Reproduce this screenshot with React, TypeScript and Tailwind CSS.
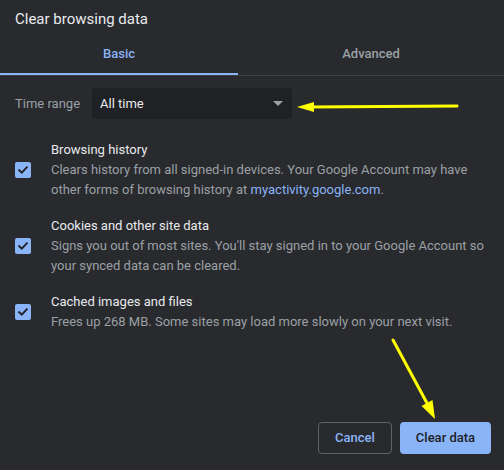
import React from "react";

function Check() {
  return (
    <div className="w-[16px] h-[16px] rounded-[2px] bg-[#8ab4f8] flex items-center justify-center shrink-0">
      <svg width="12" height="12" viewBox="0 0 12 12">
        <path d="M2.2 6.2 L4.8 8.7 L9.8 3.4" fill="none" stroke="#202124" strokeWidth="1.9" strokeLinecap="square" />
      </svg>
    </div>
  );
}

function Item({ title, children }: { title: string; children: React.ReactNode }) {
  return (
    <div className="flex items-center">
      <Check />
      <div className="ml-[20px]">
        <div className="text-[13px] leading-[20px] text-[#e8eaed]">{title}</div>
        <div className="text-[13px] leading-[20px] text-[#9aa0a6]">{children}</div>
      </div>
    </div>
  );
}

export default function App() {
  return (
    <div
      className="relative w-[504px] h-[470px] bg-[#292a2d] flex flex-col overflow-hidden"
      style={{ fontFamily: "Roboto, 'Liberation Sans', sans-serif" }}
    >
      <div className="px-[15px] pt-[10px] h-[28px] text-[15px] leading-[18px] text-[#e8eaed]">
        Clear browsing data
      </div>
      <div className="flex border-b border-[#3c4043]">
        <div className="w-[238px] h-[47px] flex flex-col">
          <div className="flex-1 flex items-end justify-center pb-[11px] text-[13px] leading-[16px] font-medium text-[#8ab4f8]">
            Basic
          </div>
          <div className="h-[2px] bg-[#8ab4f8]" />
        </div>
        <div className="flex-1 h-[47px] flex items-end justify-center pb-[13px] text-[13px] leading-[16px] font-medium text-[#9aa0a6]">
          Advanced
        </div>
      </div>
      <div className="flex items-center mt-[12px] px-[15px]">
        <div className="text-[13px] text-[#9aa0a6] w-[77px]">Time range</div>
        <div className="w-[200px] h-[31px] rounded-[4px] bg-[#202124] flex items-center justify-between pl-[8px] pr-[8px]">
          <span className="text-[13px] text-[#e8eaed]">All time</span>
          <svg width="10" height="5" viewBox="0 0 10 5" className="mr-[1px]">
            <path d="M0 0 L10 0 L5 5 Z" fill="#9aa0a6" />
          </svg>
        </div>
      </div>
      <div className="flex flex-col px-[15px] mt-[21px] gap-[16px]">
        <Item title="Browsing history">
          Clears history from all signed-in devices. Your Google Account may have
          <br />
          other forms of browsing history at <span className="text-[#8ab4f8]">myactivity.google.com</span>.
        </Item>
        <Item title="Cookies and other site data">
          Signs you out of most sites. You'll stay signed in to your Google Account so
          <br />
          your synced data can be cleared.
        </Item>
        <Item title="Cached images and files">
          Frees up 268 MB. Some sites may load more slowly on your next visit.
        </Item>
      </div>
      <div className="mt-auto flex justify-end gap-[8px] pr-[13px] pb-[16px]">
        <button className="w-[74px] h-[32px] rounded-[4px] border border-[#5f6368] text-[13px] font-medium text-[#8ab4f8]">
          Cancel
        </button>
        <button className="w-[91px] h-[32px] rounded-[4px] bg-[#8ab4f8] text-[13px] font-medium text-[#202124]">
          Clear data
        </button>
      </div>
      <svg className="absolute left-0 top-0 pointer-events-none" width="504" height="470" viewBox="0 0 504 470">
        <line x1="310" y1="107" x2="457" y2="106" stroke="#ffff00" strokeWidth="3" strokeLinecap="round" />
        <polygon points="297,107 314,102 314,112" fill="#ffff00" />
        <line x1="393" y1="340" x2="428" y2="405" stroke="#ffff00" strokeWidth="3" strokeLinecap="round" />
        <polygon points="435,419 421.5,406 432.5,400" fill="#ffff00" />
      </svg>
    </div>
  );
}
